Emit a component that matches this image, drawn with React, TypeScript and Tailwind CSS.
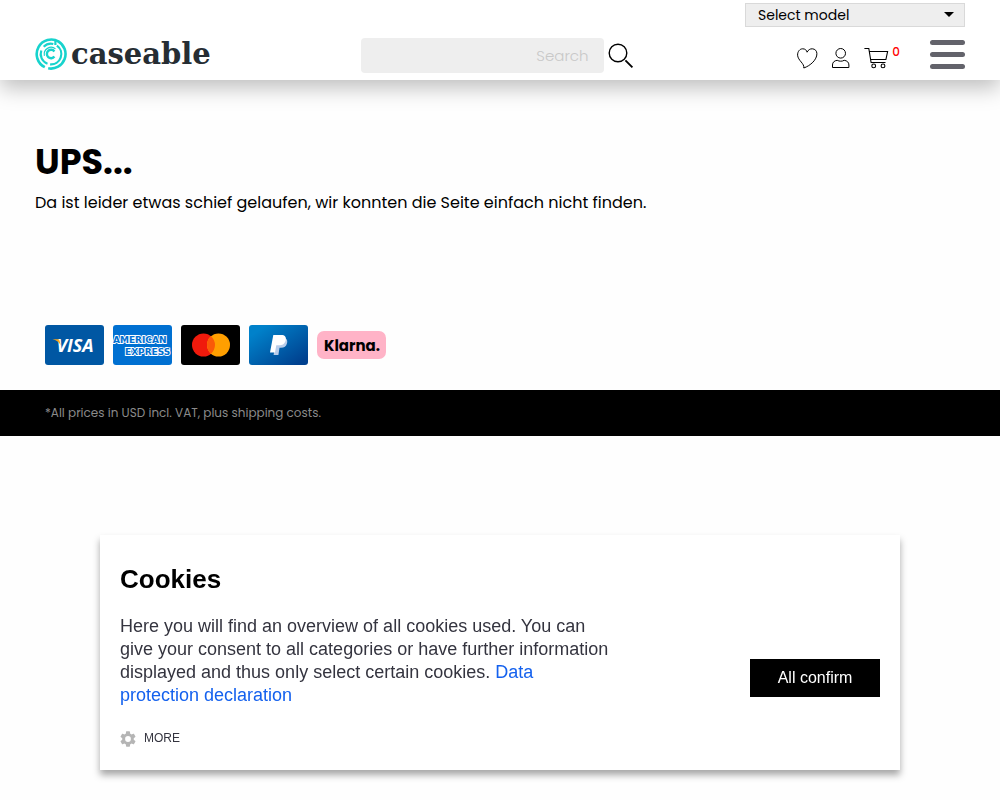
function Logo() {
    return (
        <a href="/" aria-label="caseable" className="flex items-center gap-1">
            <svg viewBox="0 0 32 32" className="size-8 shrink-0" fill="none" stroke="#17d3cd" strokeWidth="2.6">
                <path d="M9.8 29.2A14.6 14.6 0 1 1 23.8 3.6" />
                <path d="M23.2 3.3A14.6 14.6 0 0 1 13.2 30.3" />
                <path d="M20.4 2.6V7M6.3 12.5A10.3 10.3 0 0 0 12.5 25.7M8.7 8.7A10.3 10.3 0 0 1 18.3 6M21.9 7.6A10.3 10.3 0 0 1 15.1 26.3" strokeWidth="2.2" />
                <path d="M9.4 17.8A6.9 6.9 0 0 1 20.5 10.9" strokeWidth="1.2" />
                <path d="M19.4 13.4A4.2 4.2 0 1 0 19.4 18.6" strokeWidth="2.4" />
            </svg>
            <span className="font-['DejaVu_Serif',serif] text-[29px] leading-8 font-bold text-[#262d33]">caseable</span>
        </a>
    );
}

function SearchForm() {
    return (
        <form className="flex items-center gap-1" onSubmit={(e) => e.preventDefault()}>
            <input
                type="text"
                aria-label="Search"
                placeholder="Search"
                className="h-[35px] w-[243px] rounded-sm bg-[#eeeeee] px-[15px] text-right text-[15px] font-light placeholder:text-[#c8c8c8] focus:outline-none"
            />
            <button type="submit" aria-label="Start search">
                <svg viewBox="0 0 26 26" className="size-[26px]" fill="none" stroke="#000">
                    <circle cx="10" cy="10" r="8.8" strokeWidth="1.4" />
                    <path d="M17.4 17.4L24.4 24.4" strokeWidth="1.9" />
                </svg>
            </button>
        </form>
    );
}

function HeaderIcons() {
    return (
        <div className="ml-auto flex items-start">
            <a href="/wishlist" aria-label="Wishlist" className="mt-2 mr-[14px]">
                <svg viewBox="0 0 21 21" className="size-[21px]" fill="none" stroke="#000" strokeWidth="1">
                    <path d="M6.8 20C7.6 15.4 1 12.7.6 7.2.5 3.5 2.8.8 5.7.8c2.5 0 3.9 1.4 4.4 3.4C11.2 1.9 13.1.7 15.3.8c2.7.1 4.6 2.1 4.6 4.9C19.9 11.8 13.5 17.6 6.8 20z" />
                </svg>
            </a>
            <a href="/account" aria-label="Account" className="mt-2 mr-[14px]">
                <svg viewBox="0 0 18 21" className="h-[21px] w-[18px]" fill="none" stroke="#000" strokeWidth="1">
                    <circle cx="8.7" cy="5.3" r="4.8" />
                    <path d="M.5 19.5V17c0-2.7 1.8-4.3 4.7-4.7 1.2.7 2.3.9 3.5.9s2.3-.2 3.5-.9c2.9.4 4.7 2 4.7 4.7v2.5z" />
                </svg>
            </a>
            <a href="/cart" aria-label="Cart" className="mt-2 flex items-start gap-[3px]">
                <svg viewBox="0 0 25 21" className="h-[21px] w-[25px]" fill="none" stroke="#000" strokeWidth="1.1">
                    <path d="M.4.5h4.4l2.3 14h14.4M5.4 3.5h18.2l-1.7 8H6.8" />
                    <circle cx="9.7" cy="17.9" r="1.9" />
                    <circle cx="19" cy="17.9" r="1.9" />
                </svg>
                <span className="text-xs leading-2 font-medium text-[#ff0000]">0</span>
            </a>
            <button type="button" aria-label="Menu" className="ml-[30px] flex w-[35px] flex-col gap-[7px]">
                <span className="h-[5px] w-full rounded-full bg-[#63636b]" />
                <span className="h-[5px] w-full rounded-full bg-[#63636b]" />
                <span className="h-[5px] w-full rounded-full bg-[#63636b]" />
            </button>
        </div>
    );
}

function Header() {
    return (
        <header className="bg-white px-[35px] pt-[3px] pb-[7px] shadow-[0_8px_20px_rgba(0,0,0,0.25)]">
            <div className="relative ml-auto w-[220px]">
                <select
                    aria-label="Select model"
                    className="block h-6 w-full appearance-none border border-[#d9d9d9] bg-[#eeeeee] px-3 text-sm leading-5 text-black"
                >
                    <option>Select model</option>
                </select>
                <svg viewBox="0 0 10 5" className="pointer-events-none absolute top-[9px] right-[11px] h-[5px] w-[10px]">
                    <path d="M0 0h10L5 5z" />
                </svg>
            </div>
            <div className="mt-[11px] flex items-start">
                <div className="w-[35%]">
                    <Logo />
                </div>
                <SearchForm />
                <div className="ml-auto pt-[2px]">
                    <HeaderIcons />
                </div>
            </div>
        </header>
    );
}

function PaymentMethods() {
    return (
        <ul className="flex items-center gap-[9px] px-[45px]">
            <li>
                <svg viewBox="0 0 59 40" className="h-10 w-[59px]" role="img" aria-label="Visa">
                    <rect width="59" height="40" rx="3" fill="#0057a3" />
                    <text x="30" y="27" textAnchor="middle" fontFamily="Open Sans, sans-serif" fontSize="18" fontWeight="700" fontStyle="italic" fill="#fff">VISA</text>
                    <path d="M7.4 14.2h5.4c1 0 1.6.7 1.8 1.6l1 4.2c-1.6-3-4.4-4.9-8.2-5.8z" fill="#faa61a" />
                </svg>
            </li>
            <li>
                <svg viewBox="0 0 59 40" className="h-10 w-[59px]" role="img" aria-label="American Express">
                    <rect width="59" height="40" rx="3" fill="#0070d1" />
                    <g fontFamily="DejaVu Sans, sans-serif" fontSize="9" fontWeight="700" fill="#0070d1" stroke="#fff" strokeWidth="1.8" paintOrder="stroke">
                        <text x="0" y="18">AMERICAN</text>
                        <text x="12" y="30">EXPRESS</text>
                    </g>
                </svg>
            </li>
            <li>
                <svg viewBox="0 0 59 40" className="h-10 w-[59px]" role="img" aria-label="Mastercard">
                    <rect width="59" height="40" rx="3" fill="#000" />
                    <circle cx="22.5" cy="20" r="11.5" fill="#f01a0c" />
                    <circle cx="37.5" cy="20" r="11.5" fill="#ff9f00" />
                    <path d="M30 11.3a11.5 11.5 0 0 1 0 17.4 11.5 11.5 0 0 1 0-17.4z" fill="#fa5a08" />
                </svg>
            </li>
            <li>
                <svg viewBox="0 0 59 40" className="h-10 w-[59px]" role="img" aria-label="PayPal">
                    <defs>
                        <linearGradient id="paypal" x1="0" y1="0" x2="1" y2="1">
                            <stop offset="0.15" stopColor="#0081ca" />
                            <stop offset="0.9" stopColor="#00418f" />
                        </linearGradient>
                    </defs>
                    <rect width="59" height="40" rx="3" fill="url(#paypal)" />
                    <path d="M27.5 13h6.5c3.4 0 4.8 2 4.1 4.9-.8 3.4-3 4.8-6.2 4.8h-1.4L29.4 30h-4.8z" fill="#b9cdea" />
                    <path d="M24.3 10h7.8c3.9 0 5.4 2 4.6 5.2-.8 3.7-3.4 5.1-6.8 5.1h-2.6L26 27.5h-5z" fill="#fff" />
                </svg>
            </li>
            <li>
                <svg viewBox="0 0 69 28" className="h-7 w-[69px]" role="img" aria-label="Klarna">
                    <rect width="69" height="28" rx="7" fill="#ffb3c7" />
                    <text x="35" y="20" textAnchor="middle" fontFamily="Poppins, sans-serif" fontSize="15" fontWeight="700" fill="#000">Klarna.</text>
                </svg>
            </li>
        </ul>
    );
}

function CookieBanner() {
    return (
        <section
            aria-label="Cookies"
            className="fixed inset-x-0 bottom-[30px] mx-auto flex w-4/5 items-end justify-between bg-white px-5 pt-[27px] pb-6 font-['Liberation_Sans',Arial,sans-serif] shadow-[0_5px_7px_rgba(0,0,0,0.35)]"
        >
            <div className="w-[490px]">
                <h2 className="text-[26px] leading-[34px] font-bold text-black">Cookies</h2>
                <p className="mt-[19px] text-lg leading-[23px] text-[#34343f]">
                    Here you will find an overview of all cookies used. You can give your consent to all categories or have
                    further information displayed and thus only select certain cookies.{' '}
                    <a href="/privacy" className="text-[#1461ee]">Data protection declaration</a>
                </p>
                <button type="button" className="mt-[23px] flex items-center gap-2 text-xs leading-4 text-[#34343f]">
                    <svg viewBox="2 2 20 20" className="size-4 translate-y-px" fill="#b5b5b5">
                        <path d="M19.14 12.94c.04-.3.06-.61.06-.94 0-.32-.02-.64-.07-.94l2.03-1.58a.49.49 0 0 0 .12-.61l-1.92-3.32a.488.488 0 0 0-.59-.22l-2.39.96c-.5-.38-1.03-.7-1.62-.94l-.36-2.54a.484.484 0 0 0-.48-.41h-3.84c-.24 0-.43.17-.47.41l-.36 2.54c-.59.24-1.13.57-1.62.94l-2.39-.96a.49.49 0 0 0-.59.22L2.74 8.87c-.12.21-.08.47.12.61l2.03 1.58c-.05.3-.09.63-.09.94s.02.64.07.94l-2.03 1.58a.49.49 0 0 0-.12.61l1.92 3.32c.12.22.37.29.59.22l2.39-.96c.5.38 1.03.7 1.62.94l.36 2.54c.05.24.24.41.48.41h3.84c.24 0 .44-.17.47-.41l.36-2.54c.59-.24 1.13-.56 1.62-.94l2.39.96c.22.08.47 0 .59-.22l1.92-3.32a.49.49 0 0 0-.12-.61zM12 15.6a3.6 3.6 0 1 1 0-7.2 3.6 3.6 0 0 1 0 7.2z" />
                    </svg>
                    MORE
                </button>
            </div>
            <button type="button" className="mb-[49px] h-[38px] w-[130px] bg-black text-base text-white">
                All confirm
            </button>
        </section>
    );
}

export default function App() {
    return (
        <div className="min-h-screen bg-[#fefefe] font-['Poppins','Inter',sans-serif] text-black">
            <Header />
            <main className="px-[35px] pt-[60px] pb-[110px]">
                <h1 className="text-[35px] leading-[44px] font-bold">UPS...</h1>
                <p className="mt-[7px] text-base leading-6">
                    Da ist leider etwas schief gelaufen, wir konnten die Seite einfach nicht finden.
                </p>
            </main>
            <footer>
                <PaymentMethods />
                <p className="mt-[25px] bg-black px-[45px] py-[13px] text-xs leading-5 text-[#8a8a8a]">
                    *All prices in USD incl. VAT, plus shipping costs.
                </p>
            </footer>
            <CookieBanner />
        </div>
    );
}
